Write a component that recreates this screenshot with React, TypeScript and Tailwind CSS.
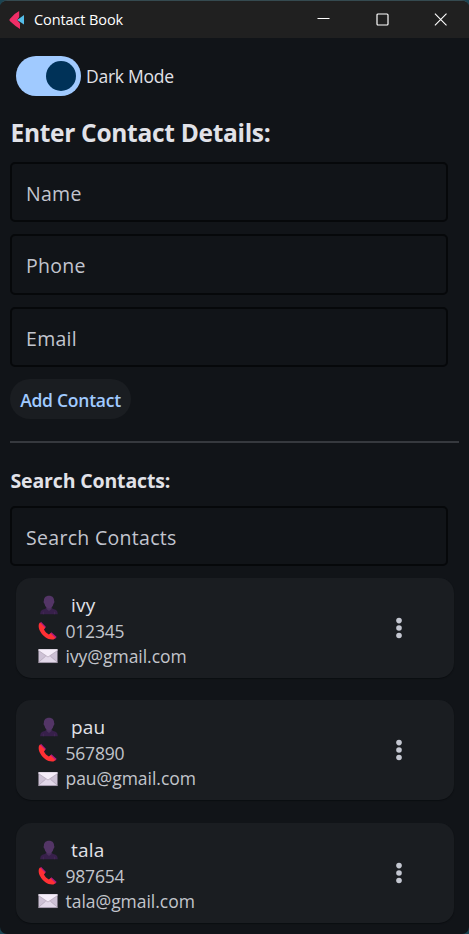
import React from "react";

type Contact = { name: string; phone: string; email: string };

const contacts: Contact[] = [
  { name: "ivy", phone: "012345", email: "ivy@gmail.com" },
  { name: "pau", phone: "567890", email: "pau@gmail.com" },
  { name: "tala", phone: "987654", email: "tala@gmail.com" },
];

function PersonIcon() {
  return (
    <svg className="h-5 w-5 shrink-0" viewBox="0 0 20 20">
      <path d="M1.2 19.3C1.3 15.8 2.6 14.8 5 14.2L7.7 13H12.3L15 14.2C17.4 14.8 18.7 15.8 18.8 19.3Z" fill="#37204a" />
      <path d="M4.3 16.7V19.3M15.7 16.7V19.3" stroke="#4b2c5c" strokeWidth="0.7" />
      <path d="M7.5 11H12.5V14.1L10 16L7.5 14.1Z" fill="#49305b" />
      <path d="M10 .8C6.6 .8 4.7 3 4.9 6.1C4.3 6.4 4.6 8.3 5.5 8.7C6 11.4 8 13.6 10 13.6C12 13.6 14 11.4 14.5 8.7C15.4 8.3 15.7 6.4 15.1 6.1C15.3 3 13.4 .8 10 .8Z" fill="#533566" />
    </svg>
  );
}

function PhoneIcon() {
  return (
    <svg className="h-5 w-5 shrink-0" viewBox="0 0 20 20">
      <path d="M3 .8L8 5.9L6.4 7.7L1.8 2.4ZM13.4 11.2L18.7 16L17 17.8L11.8 13.1Z" fill="#b4197e" />
      <path d="M2 1.6C0 3.1.4 7.4 2.3 10.6C5 15.3 9.8 18.9 14.6 18.6C15.8 18.5 16.8 17.9 17.5 17L12.5 12.3L10.8 13.6C8.9 12.7 6.9 10.6 6 8.6L7.1 6.7Z" fill="#ff3034" />
    </svg>
  );
}

function MailIcon() {
  return (
    <svg className="h-5 w-5 shrink-0" viewBox="0 0 20 20">
      <path d="M.5 3.3H19.5V16.7H.5Z" fill="#cdc1d5" />
      <path d="M.5 16.3L7.7 10.2H12.3L19.5 16.3Z" fill="#e2d8e9" />
      <path d="M.5 3.3H19.5V4.5L10 11L.5 4.5Z" fill="#f5edf9" />
      <path d="M.5 4.5L10 11L19.5 4.5M.5 16.3L7.6 10.3M19.5 16.3L12.4 10.3" fill="none" stroke="#a99caf" strokeWidth=".6" />
      <path d="M.5 16.6H19.5" stroke="#9c91a3" strokeWidth=".5" />
    </svg>
  );
}

function Field({ label }: { label: string }) {
  return (
    <div className="h-[60.5px] w-[438px] rounded-[5px] border-2 border-[#06080a] pt-[15px] pl-[14px] text-[19.5px] leading-[30px] tracking-[0.3px] text-[#c2c5cf]">
      {label}
    </div>
  );
}

function ContactCard({ contact }: { contact: Contact }) {
  return (
    <article className="flex h-[100px] w-[438px] shrink-0 justify-between rounded-[15px] bg-[#1a1d21] pr-[45px] pl-[22px] shadow-[0_1px_1px_#0b0e11]">
      <div className="pt-[14px]">
        <div className="flex h-[26px] items-center gap-[12.5px] pl-[0.5px] text-[19px] leading-[26px] tracking-[0.2px] text-[#e1e2e8]">
          <PersonIcon />
          <span>{contact.name}</span>
        </div>
        <div className="flex h-[25px] items-center gap-[7.5px] pt-[1px] text-[17.5px] leading-[25px] text-[#c2c5cc]">
          <PhoneIcon />
          <span className="pt-[1px] tracking-[-0.2px]">{contact.phone}</span>
        </div>
        <div className="flex h-[25px] items-center gap-[7.5px] pt-[2px] text-[17.5px] leading-[25px] tracking-[-0.03px] text-[#c2c5cc]">
          <MailIcon />
          <span>{contact.email}</span>
        </div>
      </div>
      <button className="flex w-5 items-center justify-center" aria-label={`Options for ${contact.name}`}>
        <svg className="h-[22px] w-5" viewBox="0 0 20 22" fill="#c4c7d1">
          <circle cx="10" cy="3.6" r="2.8" /><circle cx="10" cy="11" r="2.8" /><circle cx="10" cy="18.5" r="2.8" />
        </svg>
      </button>
    </article>
  );
}

export default function App() {
  return (
    <div className="h-[934px] w-[469px] overflow-hidden bg-[#1b4452]">
      <div className="flex h-[934px] flex-col overflow-hidden rounded-[7px] border-t border-[#354a50] bg-[#111418] font-['Open_Sans','Noto_Sans',sans-serif]">
        <header className="flex h-[37px] shrink-0 items-center justify-between bg-[#202020] pr-[22px] pl-[9px] text-white">
          <div className="flex items-center gap-[9px]">
            <svg className="h-[20px] w-4" viewBox="0 0 16 20">
              <path d="M10.2 1V7L8.2 10L11 13.5V19Q6 16 .8 11Q0 10 .8 9Q5 3.5 10.2 1Z" fill="#ef2e67" />
              <path d="M15 5V14.5L8.2 10Z" fill="#55bee9" />
            </svg>
            <h1 className="text-[14.5px] leading-5 tracking-[-0.1px]">Contact Book</h1>
          </div>
          <div className="flex items-center gap-[45.5px]">
            <svg className="h-[13px] w-[13px]" viewBox="0 0 13 13"><path d="M.5 5.5H12.5" stroke="white" /></svg>
            <svg className="h-[13px] w-[13px]" viewBox="0 0 13 13"><rect x="1" y="1" width="11" height="11" rx="1" fill="none" stroke="white" strokeWidth="1.2" /></svg>
            <svg className="h-[13px] w-[13px]" viewBox="0 0 13 13"><path d="M.9.7L12.5 12.3M12.5.7L.9 12.3" stroke="white" strokeWidth="1.1" /></svg>
          </div>
        </header>
        <main className="flex flex-col items-start pl-[10px]">
          <div className="mt-[18px] ml-[6px] flex h-10 items-center">
            <div className="flex h-10 w-[65px] items-center justify-end rounded-full bg-[#a0caff] pr-[5px]">
              <div className="h-[30px] w-[30px] rounded-full bg-[#003258]" />
            </div>
            <span className="ml-[5px] text-[17.5px] leading-[24px] tracking-[-0.25px] text-[#e1e2e8]">Dark Mode</span>
          </div>
          <h2 className="mt-[20px] h-[46px] pl-[0.5px] text-[24.5px] leading-[34px] font-bold tracking-[-0.3px] text-[#e1e2e8]">Enter Contact Details:</h2>
          <div className="-mt-[0.5px] flex flex-col gap-[12px]">
            <Field label="Name" />
            <Field label="Phone" />
            <Field label="Email" />
          </div>
          <button className="mt-[12px] h-10 w-[121px] rounded-full bg-[#1a1d21] pt-[1px] text-[17.5px] leading-6 font-semibold tracking-[-0.25px] text-[#a0caff]">Add Contact</button>
          <div className="mt-[21.5px] h-[2px] w-[449px] bg-[#36393e]" />
          <h3 className="mt-[24px] h-[39px] pl-[0.5px] text-[19.5px] leading-7 font-bold tracking-[-0.15px] text-[#e1e2e8]">Search Contacts:</h3>
          <Field label="Search Contacts" />
          <div className="mt-[11.5px] ml-[6px] flex flex-col gap-[22.5px]">
            {contacts.map((contact) => <ContactCard key={contact.name} contact={contact} />)}
          </div>
        </main>
      </div>
    </div>
  );
}
